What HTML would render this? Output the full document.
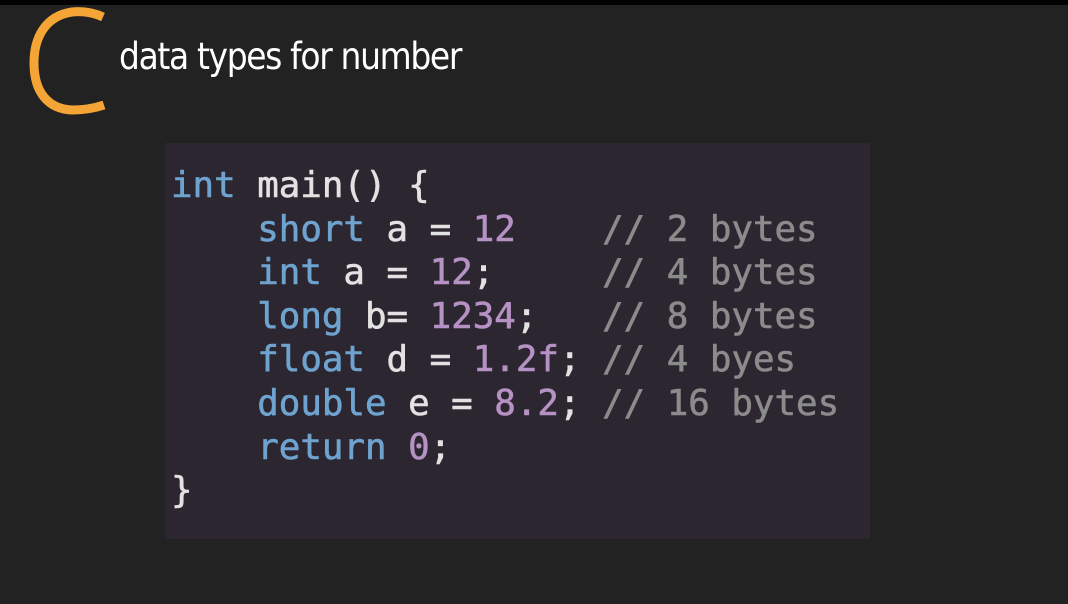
<!DOCTYPE html>
<html><head><meta charset="utf-8"><style>
html,body{margin:0;padding:0}
body{width:1068px;height:604px;background:#222222;position:relative;overflow:hidden;font-family:"Liberation Sans",sans-serif}
.top{position:absolute;left:0;top:0;width:1068px;height:5px;background:#000}
svg.c{position:absolute;left:0;top:0}
.t{position:absolute;left:119px;top:35px;font-size:37px;color:#fff;letter-spacing:-1.5px;font-family:"DejaVu Sans","Liberation Sans",sans-serif;transform:scaleX(0.89);transform-origin:left;white-space:nowrap}
.box{position:absolute;left:165px;top:143px;width:705px;height:396px;background:#2b2630}
pre{position:absolute;left:171px;top:164px;margin:0;font-family:"DejaVu Sans Mono","Liberation Mono",monospace;font-size:35.8px;line-height:43.6px;color:#e2e2e2;-webkit-text-stroke:0.6px currentColor}
.k{color:#6fa3cf}.n{color:#b591c4}.m{color:#8b8b8b}
</style></head><body>
<div class="top"></div>
<svg class="c" width="120" height="125"><path d="M103,17 C92,12 82,11 72,12 C45,16 34,38 34,63 C34,92 48,109 72,110 C84,110 95,108 104,105" fill="none" stroke="#f5a535" stroke-width="9"/></svg>
<div class="t">data types for number</div>
<div class="box"></div>
<pre><span class="k">int</span> main() {
    <span class="k">short</span> a = <span class="n">12</span>    <span class="m">// 2 bytes</span>
    <span class="k">int</span> a = <span class="n">12</span>;     <span class="m">// 4 bytes</span>
    <span class="k">long</span> b= <span class="n">1234</span>;   <span class="m">// 8 bytes</span>
    <span class="k">float</span> d = <span class="n">1.2f</span>; <span class="m">// 4 byes</span>
    <span class="k">double</span> e = <span class="n">8.2</span>; <span class="m">// 16 bytes</span>
    <span class="k">return</span> <span class="n">0</span>;
}</pre>
</body></html>
